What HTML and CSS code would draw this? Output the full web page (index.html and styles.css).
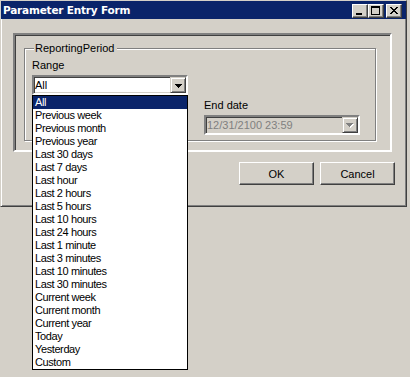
FILE: index.html
```html
<!DOCTYPE html>
<html>
<head>
<meta charset="utf-8">
<link rel="stylesheet" href="styles.css">
</head>
<body>
<div class="window">
  <div class="titlebar">
    <span class="title">Parameter Entry Form</span>
    <div class="caption-btns">
      <div class="cbtn"><svg width="6" height="2" viewBox="0 0 6 2" shape-rendering="crispEdges"><rect x="0" y="0" width="6" height="2" fill="#000"/></svg></div>
      <div class="cbtn"><svg width="9" height="9" viewBox="0 0 9 9" shape-rendering="crispEdges"><rect x="0" y="0" width="9" height="2" fill="#000"/><rect x="0" y="0" width="1" height="9" fill="#000"/><rect x="8" y="0" width="1" height="9" fill="#000"/><rect x="0" y="8" width="9" height="1" fill="#000"/></svg></div>
      <div class="cbtn close"><svg width="8" height="7" viewBox="0 0 8 7" shape-rendering="crispEdges" fill="#000"><rect x="0" y="0" width="2" height="1"/><rect x="6" y="0" width="2" height="1"/><rect x="1" y="1" width="2" height="1"/><rect x="5" y="1" width="2" height="1"/><rect x="2" y="2" width="4" height="1"/><rect x="3" y="3" width="2" height="1"/><rect x="2" y="4" width="4" height="1"/><rect x="1" y="5" width="2" height="1"/><rect x="5" y="5" width="2" height="1"/><rect x="0" y="6" width="2" height="1"/><rect x="6" y="6" width="2" height="1"/></svg></div>
    </div>
  </div>
  <div class="client">
    <div class="panel">
      <div class="group">
        <div class="group-title">ReportingPeriod</div>
        <div class="label">Range</div>
        <div class="combo-wrap">
          <div class="combo">
            <span class="combo-text">All</span>
            <div class="drop-btn"><svg width="7" height="4" viewBox="0 0 7 4" shape-rendering="crispEdges" fill="#000"><rect x="0" y="0" width="7" height="1"/><rect x="1" y="1" width="5" height="1"/><rect x="2" y="2" width="3" height="1"/><rect x="3" y="3" width="1" height="1"/></svg></div>
          </div>
          <ul class="listbox">
            <li class="selected">All</li>
            <li>Previous week</li>
            <li>Previous month</li>
            <li>Previous year</li>
            <li>Last 30 days</li>
            <li>Last 7 days</li>
            <li>Last hour</li>
            <li>Last 2 hours</li>
            <li>Last 5 hours</li>
            <li>Last 10 hours</li>
            <li>Last 24 hours</li>
            <li>Last 1 minute</li>
            <li>Last 3 minutes</li>
            <li>Last 10 minutes</li>
            <li>Last 30 minutes</li>
            <li>Current week</li>
            <li>Current month</li>
            <li>Current year</li>
            <li>Today</li>
            <li>Yesterday</li>
            <li>Custom</li>
          </ul>
        </div>
        <div class="dates">
          <div class="field"></div>
          <div class="field">
            <div class="label">End date</div>
            <div class="combo disabled">
              <span class="combo-text">12/31/2100 23:59</span>
              <div class="drop-btn"><svg width="8" height="5" viewBox="0 0 8 5" shape-rendering="crispEdges"><g fill="#fff"><rect x="1" y="1" width="7" height="1"/><rect x="2" y="2" width="5" height="1"/><rect x="3" y="3" width="3" height="1"/><rect x="4" y="4" width="1" height="1"/></g><g fill="#808080"><rect x="0" y="0" width="7" height="1"/><rect x="1" y="1" width="5" height="1"/><rect x="2" y="2" width="3" height="1"/><rect x="3" y="3" width="1" height="1"/></g></svg></div>
            </div>
          </div>
        </div>
      </div>
    </div>
    <div class="actions">
      <button class="btn">OK</button>
      <button class="btn">Cancel</button>
    </div>
  </div>
</div>
</body>
</html>
```
FILE: styles.css
```css
* { box-sizing: border-box; }
html, body { margin: 0; padding: 0; }
body {
  background: #d4d0c8;
  font-family: "Liberation Sans", Arial, sans-serif;
  font-size: 11px;
  color: #000;
  width: 410px;
  height: 377px;
  overflow: hidden;
}
.window {
  width: 407px;
  height: 207px;
  border: 1px solid;
  border-color: #d4d0c8 #404040 #404040 #d4d0c8;
  box-shadow: inset 1px 1px #fff, inset -1px -1px #808080;
  background: #d4d0c8;
  display: flex;
  flex-direction: column;
}
.titlebar {
  height: 18px;
  background: #0a246a;
  display: flex;
  align-items: center;
  justify-content: space-between;
  padding: 0 4px 0 2px;
}
.title {
  color: #fff;
  font-family: "DejaVu Sans", Tahoma, sans-serif;
  font-weight: bold;
  font-size: 10.5px;
  letter-spacing: -0.2px;
}
.caption-btns {
  display: flex;
  align-items: center;
  margin-top: 1px;
}
.cbtn {
  width: 16px;
  height: 14px;
  background: #d4d0c8;
  border: 1px solid;
  border-color: #fff #404040 #404040 #fff;
  box-shadow: inset -1px -1px #808080;
  display: flex;
  align-items: flex-end;
  justify-content: flex-start;
  padding: 0 0 2px 3px;
}
.cbtn:nth-child(2) {
  align-items: flex-start;
  padding: 1px 0 0 2px;
}
.cbtn.close {
  margin-left: 2px;
  align-items: flex-start;
  padding: 2px 0 0 3px;
}
.cbtn svg { display: block; }
.client {
  flex: 1;
  padding: 14px 0 0 12px;
  display: flex;
  flex-direction: column;
}
.panel {
  width: 379px;
  height: 119px;
  border: 2px solid;
  border-color: #808080 #fff #fff #808080;
  box-shadow: inset 1px 1px #404040;
  padding: 13px 14px 0 9px;
}
.group {
  border: 1px solid #808080;
  box-shadow: inset 1px 1px #fff, 1px 1px #fff;
  height: 93px;
  padding: 0 0 0 7px;
}
.group-title {
  margin: -7px 0 0 2px;
  width: fit-content;
  background: #d4d0c8;
  padding: 0 2px 0 1px;
  line-height: 13px;
  height: 13px;
}
.label {
  line-height: 13px;
  height: 13px;
  white-space: nowrap;
}
.group > .label { margin-top: 4px; }
.combo-wrap {
  position: relative;
  width: 156px;
  margin-top: 3px;
  z-index: 2;
}
.combo {
  width: 156px;
  height: 20px;
  background: #fff;
  border: 2px solid;
  border-color: #808080 #fff #fff #808080;
  box-shadow: inset 1px 1px #404040, inset -1px -1px #d4d0c8;
  display: flex;
  align-items: stretch;
  justify-content: space-between;
}
.combo-text {
  padding-left: 1px;
  line-height: 16px;
  white-space: nowrap;
  overflow: hidden;
}
.drop-btn {
  width: 16px;
  height: 16px;
  flex: none;
  background: #d4d0c8;
  border: 1px solid;
  border-color: #d4d0c8 #404040 #404040 #d4d0c8;
  box-shadow: inset 1px 1px #fff, inset -1px -1px #808080;
  display: flex;
  align-items: center;
  justify-content: center;
  padding-top: 1px;
}
.drop-btn svg { display: block; }
.combo.disabled { background: #d4d0c8; }
.combo.disabled .combo-text { color: #808080; }
.listbox {
  position: absolute;
  top: 20px;
  left: 0;
  width: 156px;
  margin: 0;
  padding: 0;
  list-style: none;
  background: #fff;
  border: 1px solid #000;
}
.listbox li {
  height: 13px;
  line-height: 13px;
  padding-left: 2px;
  white-space: nowrap;
  letter-spacing: -0.4px;
}
.listbox li.selected {
  background: #0a246a;
  color: #fff;
}
.dates {
  display: grid;
  grid-template-columns: 156px 156px;
  column-gap: 16px;
  margin-top: 4px;
}
.field .combo { margin-top: 3px; }
.actions {
  display: flex;
  justify-content: flex-end;
  gap: 6px;
  margin-top: 10px;
  padding-right: 11px;
}
.btn {
  width: 75px;
  height: 23px;
  font-family: "Liberation Sans", Arial, sans-serif;
  font-size: 11px;
  color: #000;
  background: #d4d0c8;
  border: 1px solid;
  border-color: #fff #404040 #404040 #fff;
  box-shadow: inset -1px -1px #808080;
  padding: 0;
  margin: 0;
}
```
